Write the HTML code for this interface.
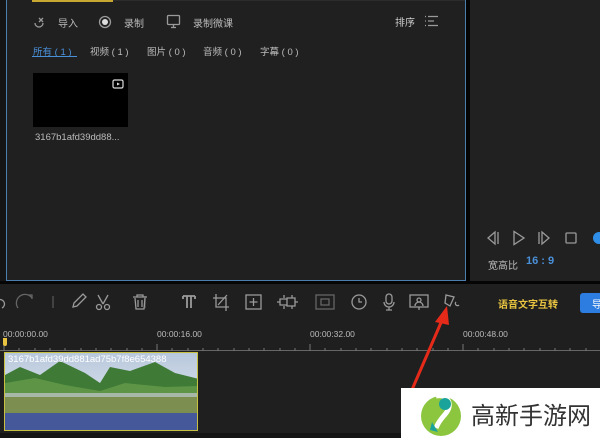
<!DOCTYPE html>
<html><head><meta charset="utf-8"><style>
*{margin:0;padding:0;box-sizing:border-box}
body{width:600px;height:438px;background:#1f1f1f;position:relative;overflow:hidden;font-family:"Liberation Sans","Noto Sans CJK SC",sans-serif;color:#bbb;font-size:10px}
.a{position:absolute}
.ic{position:absolute;stroke:#9a9a9a;fill:none;stroke-width:1.3}
</style></head><body>
<div class="a" style="left:0;top:0;width:6px;height:284px;background:#151515"></div>
<div class="a" style="left:6px;top:0;width:460px;height:281px;background:#202020;border-left:1px solid #4a7fb0;border-right:1px solid #4a7fb0;border-bottom:1px solid #4a7fb0"></div>
<div class="a" style="left:32px;top:0;width:81px;height:2px;background:#c8a830"></div>
<div class="a" style="left:113px;top:0;width:352px;height:1px;background:#2c2c2c"></div>
<div class="a" style="left:466px;top:0;width:4px;height:284px;background:#050505"></div>
<div class="a" style="left:470px;top:0;width:130px;height:281px;background:#212121"></div>
<div class="a" style="left:0;top:281px;width:600px;height:3px;background:#050505"></div>

<svg class="ic" style="left:33px;top:15px" width="14" height="14" viewBox="0 0 14 14"><path d="M2 8a4 4 0 0 0 8 0M6 3l4 4M6 7l4-4"/></svg>
<div class="a" style="left:58px;top:15px;font-size:10px;color:#bbb">导入</div>
<svg class="ic" style="left:98px;top:15px" width="14" height="14"><circle cx="7" cy="7" r="5.5"/><circle cx="7" cy="7" r="3" fill="#ddd" stroke="none"/></svg>
<div class="a" style="left:124px;top:15px;color:#bbb">录制</div>
<svg class="ic" style="left:166px;top:14px" width="15" height="15"><rect x="1.5" y="1.5" width="12" height="9" rx="1"/><path d="M7.5 10.5v3M5 13.5h5"/></svg>
<div class="a" style="left:193px;top:15px;color:#bbb">录制微课</div>
<div class="a" style="left:395px;top:14px;color:#ccc">排序</div>
<svg class="ic" style="left:424px;top:14px" width="16" height="14"><path d="M1 2.5h1M4 2.5h10M1 7h1M4 7h6M1 11.5h1M4 11.5h10"/></svg>

<div class="a" style="left:33px;top:44px;color:#4a90d9;font-size:9.5px">所有 ( 1 )</div>
<div class="a" style="left:32px;top:56px;width:45px;height:1px;background:#4a90d9"></div>
<div class="a" style="left:90px;top:44px;font-size:9.5px">视频 ( 1 )</div>
<div class="a" style="left:147px;top:44px;font-size:9.5px">图片 ( 0 )</div>
<div class="a" style="left:203px;top:44px;font-size:9.5px">音频 ( 0 )</div>
<div class="a" style="left:260px;top:44px;font-size:9.5px">字幕 ( 0 )</div>

<div class="a" style="left:33px;top:73px;width:95px;height:54px;background:#000"></div>
<svg class="a" style="left:112px;top:78px" width="12" height="11"><rect x="1" y="2" width="10" height="8" rx="1.5" stroke="#ddd" fill="none" stroke-width="1.2"/><path d="M5 4.5l3 1.5-3 1.5z" fill="#ddd"/></svg>
<div class="a" style="left:35px;top:132px;font-size:9.5px;color:#bbb">3167b1afd39dd88...</div>

<svg class="ic" style="left:486px;top:230px" width="120" height="16"><path d="M9 2L2 8l7 6zM12 2v12"/><path d="M28 1.5v13l10-6.5z"/><path d="M53 2v12M56 2l7 6-7 6z"/><rect x="80" y="3" width="10" height="10" rx="1"/></svg>
<div class="a" style="left:593px;top:232px;width:12px;height:12px;border-radius:50%;background:#2f8fe8"></div>
<div class="a" style="left:488px;top:257px;font-size:10px;color:#bbb">宽高比</div>
<div class="a" style="left:526px;top:255px;font-size:11px;color:#4a90d9;font-weight:bold">16 : 9</div>

<svg class="ic" style="left:0;top:290px" width="470" height="24" viewBox="0 0 470 24">
<path d="M-2 10a4 4 0 0 1 4 8"/>
<path d="M18 18a8 8 0 0 1 14-10M28 5h4v4" stroke="#666"/>
<path d="M53 6v12M145 6v12" stroke="#555"/>
<path d="M73 17l1-4 9-9 3 3-9 9z"/>
<path d="M98 5l5 9M108 5l-5 9"/><circle cx="99" cy="17" r="2.5"/><circle cx="107" cy="17" r="2.5"/>
<path d="M133 7h14M137 7V5h6v2M135 8l1 11h8l1-11M138 10v7M142 10v7"/>
<path d="M183 6h12M187 6v12M191 6v12M183 6v3M195 6v3" stroke-width="1.8"/>
<path d="M216 4v13h13M213 8h13v13M227 5l-9 10"/>
<rect x="246" y="5" width="15" height="14"/><path d="M253.5 8v8M249.5 12h8"/>
<path d="M280 9h7v6h-7zM287 8h8v8h-8zM284 5v3M284 16v3M292 5v3M292 16v3M277 12h3M295 12h3"/>
<rect x="316" y="5" width="18" height="14" stroke="#666"/><rect x="321" y="9" width="8" height="6" stroke="#666"/>
<circle cx="359" cy="12" r="7"/><path d="M359 8v4h3"/>
<rect x="386" y="4" width="6" height="10" rx="3"/><path d="M384 12a5 5 0 0 0 10 0M389 17v3M386 20h6"/>
<rect x="410" y="5" width="18" height="12"/><circle cx="419" cy="10" r="2"/><path d="M415 16a4 4 0 0 1 8 0M419 17v3"/>
<path d="M446 5l8 2-4 9-5-3zM456 12a2 2 0 1 0 3 3" />
<path d="M482 6v12" stroke="#555"/>
</svg>
<div class="a" style="left:498px;top:296px;font-size:10px;color:#e8c440;font-weight:bold">语音文字互转</div>
<div class="a" style="left:580px;top:293px;width:30px;height:20px;border-radius:3px;background:#2d7de0;color:#fff;font-size:10px;padding:3px 0 0 12px">导</div>

<div class="a" style="left:3px;top:329px;font-size:8.5px;color:#bbb">00:00:00.00</div>
<div class="a" style="left:157px;top:329px;font-size:8.5px;color:#bbb">00:00:16.00</div>
<div class="a" style="left:310px;top:329px;font-size:8.5px;color:#bbb">00:00:32.00</div>
<div class="a" style="left:463px;top:329px;font-size:8.5px;color:#bbb">00:00:48.00</div>
<svg class="a" style="left:0;top:340px" width="600" height="12">
<path d="M0 10.5H600" stroke="#666"/>
<g stroke="#777"><path d="M4 4v7M157 4v7M310 4v7M463 4v7"/>
<path d="M19 8v3M35 8v3M50 8v3M65 8v3M81 8v3M96 8v3M111 8v3M127 8v3M142 8v3M172 8v3M188 8v3M203 8v3M218 8v3M234 8v3M249 8v3M264 8v3M280 8v3M295 8v3M325 8v3M341 8v3M356 8v3M371 8v3M387 8v3M402 8v3M417 8v3M433 8v3M448 8v3M478 8v3M494 8v3M509 8v3M524 8v3M540 8v3M555 8v3M570 8v3M586 8v3"/></g>
</svg>
<div class="a" style="left:3px;top:338px;width:4px;height:8px;background:#e8c440;border-radius:0 0 2px 2px"></div>

<div class="a" style="left:4px;top:352px;width:194px;height:79px;border:1.5px solid #c8c040;overflow:hidden;background:#45589a">
<svg width="194" height="60" style="display:block">
<defs><linearGradient id="s" x1="0" y1="0" x2="0" y2="1"><stop offset="0" stop-color="#b8c8dc"/><stop offset="1" stop-color="#dfe6ee"/></linearGradient></defs>
<rect width="194" height="60" fill="url(#s)"/>
<path d="M0 22L15 14 35 22 55 8 80 20 95 30 105 14 125 18 150 9 170 20 194 26V40H0z" fill="#3f7a36"/>
<path d="M0 30L30 25 60 32 95 38 120 30 160 34 194 33V42H0z" fill="#5d9446"/>
<rect y="40" width="194" height="20" fill="#7d8f50"/>
<rect y="40" width="194" height="4" fill="#a8b8a8"/>
</svg>
<div class="a" style="left:3px;top:1px;font-size:9.5px;color:#fff">3167b1afd39dd881ad75b7f8e654388</div>
</div>
<div class="a" style="left:0;top:433px;width:600px;height:5px;background:#141414"></div>

<svg class="a" style="left:395px;top:300px" width="60" height="100"><path d="M16 92L48 18" stroke="#e52a1a" stroke-width="3"/><path d="M52 6L40 22 54 25z" fill="#e52a1a"/></svg>

<div class="a" style="left:401px;top:388px;width:199px;height:50px;background:#fff"></div>
<svg class="a" style="left:418px;top:390px" width="48" height="48"><circle cx="23" cy="26" r="20" fill="#8cc63f"/><path d="M18 6c10-2 16 6 12 14-3 6-8 8-12 18" stroke="#fff" stroke-width="5" fill="none"/><circle cx="27" cy="14" r="6" fill="#1aa39a"/><path d="M14 32l6 10-8-2z" fill="#1aa39a"/></svg>
<div class="a" style="left:471px;top:396px;font-size:24px;color:#333;font-family:'Noto Sans CJK SC',sans-serif">高新手游网</div>
</body></html>
